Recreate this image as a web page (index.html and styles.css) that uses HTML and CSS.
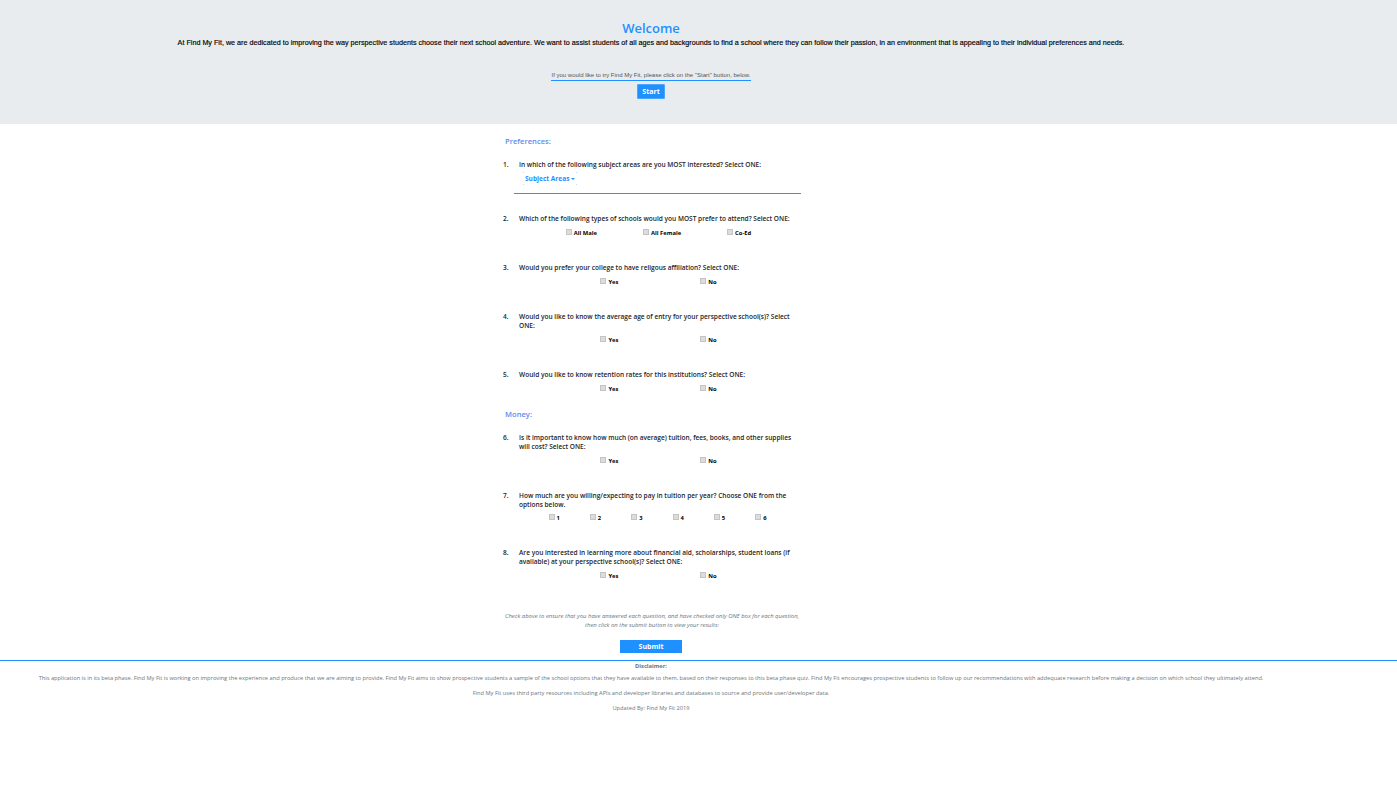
FILE: index.html
```html
<!DOCTYPE html>
<html lang="en">
<head>
  <meta charset="UTF-8" />
  <meta name="viewport" content="width=device-width, initial-scale=1.0"/>
  <title>Find My Fit</title>
  <link rel="stylesheet" href="styles.css">
</head>
<body>

<header class="hero">
  <div class="page">
    <h1>Welcome</h1>
    <p class="intro">At Find My Fit, we are dedicated to improving the way perspective students choose their next school adventure. We want to assist students of all ages and backgrounds to find a school where they can follow their passion, in an environment that is appealing to their individual preferences and needs.</p>
    <p class="try">If you would like to try Find My Fit, please click on the "Start" button, below.</p>
    <button class="start" type="button">Start</button>
  </div>
</header>

<div class="page">
  <form class="quiz">
    <h2>Preferences:</h2>

    <div class="question first">
      <span class="num">1.</span>
      <div>
        <p class="ask">In which of the following subject areas are you MOST interested? Select ONE:</p>
        <a class="dropdown" href="#">Subject Areas <span class="caret"></span></a>
      </div>
    </div>
    <hr class="rule">

    <div class="question q2">
      <span class="num">2.</span>
      <div>
        <p class="ask">Which of the following types of schools would you MOST prefer to attend? Select ONE:</p>
        <div class="opts three">
          <label><input type="checkbox"> All Male</label>
          <label><input type="checkbox"> All Female</label>
          <label><input type="checkbox"> Co-Ed</label>
        </div>
      </div>
    </div>

    <div class="question">
      <span class="num">3.</span>
      <div>
        <p class="ask">Would you prefer your college to have religous affiliation? Select ONE:</p>
        <div class="opts two">
          <label><input type="checkbox"> Yes</label>
          <label><input type="checkbox"> No</label>
        </div>
      </div>
    </div>

    <div class="question">
      <span class="num">4.</span>
      <div>
        <p class="ask">Would you like to know the average age of entry for your perspective school(s)? Select ONE:</p>
        <div class="opts two">
          <label><input type="checkbox"> Yes</label>
          <label><input type="checkbox"> No</label>
        </div>
      </div>
    </div>

    <div class="question">
      <span class="num">5.</span>
      <div>
        <p class="ask">Would you like to know retention rates for this institutions? Select ONE:</p>
        <div class="opts two">
          <label><input type="checkbox"> Yes</label>
          <label><input type="checkbox"> No</label>
        </div>
      </div>
    </div>

    <h2 class="money">Money:</h2>

    <div class="question first">
      <span class="num">6.</span>
      <div>
        <p class="ask">Is it important to know how much (on average) tuition, fees, books, and other supplies will cost? Select ONE:</p>
        <div class="opts two">
          <label><input type="checkbox"> Yes</label>
          <label><input type="checkbox"> No</label>
        </div>
      </div>
    </div>

    <div class="question">
      <span class="num">7.</span>
      <div>
        <p class="ask">How much are you willing/expecting to pay in tuition per year? Choose ONE from the options below.</p>
        <div class="opts six">
          <label><input type="checkbox"> 1</label>
          <label><input type="checkbox"> 2</label>
          <label><input type="checkbox"> 3</label>
          <label><input type="checkbox"> 4</label>
          <label><input type="checkbox"> 5</label>
          <label><input type="checkbox"> 6</label>
        </div>
      </div>
    </div>

    <div class="question">
      <span class="num">8.</span>
      <div>
        <p class="ask">Are you interested in learning more about financial aid, scholarships, student loans (if available) at your perspective school(s)? Select ONE:</p>
        <div class="opts two">
          <label><input type="checkbox"> Yes</label>
          <label><input type="checkbox"> No</label>
        </div>
      </div>
    </div>

    <p class="check">Check above to ensure that you have answered each question, and have checked only ONE box for each question, then click on the submit button to view your results:</p>
    <button class="submit" type="submit">Submit</button>
  </form>
</div>

<footer class="foot">
  <div class="page">
    <p class="disclaimer">Disclaimer:</p>
    <p class="beta">This application is in its beta phase. Find My Fit is working on improving the experience and produce that we are aiming to provide. Find My Fit aims to show prospective students a sample of the school options that they have available to them, based on their responses to this beta phase quiz. Find My Fit encourages prospective students to follow up our recommendations with addequate research before making a decision on which school they ultimately attend.</p>
    <p>Find My Fit uses third party resources including APIs and developer libraries and databases to source and provide user/developer data.</p>
    <p>Updated By: Find My Fit 2019</p>
  </div>
</footer>

</body>
</html>
```

FILE: styles.css
```css
body {
  margin: 0;
  font-family: "Open Sans", sans-serif;
  color: #212529;
  background: white;
}
p {
  margin: 0;
}
.page {
  width: 1302px;
}
.hero {
  background: #e9ecef;
  height: 124px;
  text-align: center;
  padding-top: 21px;
  box-sizing: border-box;
}
h1 {
  margin: 0;
  font-size: 13px;
  line-height: 15px;
  font-weight: 600;
  color: #1e90ff;
}
.intro {
  font-family: "Liberation Sans", sans-serif;
  font-size: 7.19px;
  line-height: 14px;
  color: black;
  -webkit-text-stroke: 0.15px black;
}
.try {
  font-family: "Liberation Sans", sans-serif;
  font-size: 6px;
  line-height: 9px;
  color: #555;
  width: 200px;
  margin: 21px auto 0;
  border-bottom: 1px solid #1e90ff;
}
.start {
  display: block;
  margin: 3px auto 0;
  width: 28px;
  height: 15px;
  padding: 0;
  border: 1px solid #4aa6ff;
  border-radius: 1px;
  background: #1e90ff;
  color: white;
  font-family: "Open Sans", sans-serif;
  font-size: 7px;
  font-weight: 700;
}
.quiz {
  width: 298px;
  margin-left: 503px;
}
h2 {
  margin: 0;
  padding: 12px 0 0 2px;
  font-size: 7.6px;
  line-height: 11px;
  font-weight: 600;
  color: #5b8def;
}
.money {
  padding-top: 15px;
}
.question {
  display: grid;
  grid-template-columns: 16px 1fr;
  font-size: 6.55px;
  line-height: 9px;
  font-weight: 600;
  margin-top: 25px;
}
.question.first {
  margin-top: 13px;
}
.q2 {
  margin-top: 20px;
}
.dropdown {
  display: block;
  width: 54px;
  height: 13px;
  box-sizing: border-box;
  margin: 3px 0 0 4px;
  padding: 2px 0 0 2px;
  color: #1e90ff;
  font-weight: 700;
  text-decoration: none;
  background:
    linear-gradient(#bcdcff, #bcdcff) left top / 1px 1px no-repeat,
    linear-gradient(#bcdcff, #bcdcff) right top / 1px 1px no-repeat,
    linear-gradient(#bcdcff, #bcdcff) left bottom / 1px 1px no-repeat,
    linear-gradient(#bcdcff, #bcdcff) right bottom / 1px 1px no-repeat;
}
.caret {
  display: inline-block;
  vertical-align: middle;
  border-top: 2px solid #1e90ff;
  border-left: 2px solid transparent;
  border-right: 2px solid transparent;
}
.rule {
  margin: 8px 0 0 11px;
  border: none;
  border-top: 1px solid #808080;
}
.opts {
  display: flex;
  justify-content: center;
  margin-top: 6px;
  padding-right: 3px;
}
.opts label {
  display: flex;
  align-items: center;
  font-size: 5.8px;
  line-height: 9px;
  font-weight: 700;
  color: black;
  gap: 2px;
}
.opts input {
  margin: -3px 0 0;
  width: 6px;
  height: 6px;
  appearance: none;
  background: #dcdcdc;
  border: 1px solid #c4c4c4;
}
.three {
  gap: 46px;
}
.two {
  gap: 82px;
}
.opts.six {
  gap: 30px;
  margin-top: 5px;
  padding-right: 5px;
}
.check {
  font-size: 5.9px;
  line-height: 9px;
  font-style: italic;
  color: #6c757d;
  text-align: center;
  margin-top: 31px;
}
.submit {
  display: block;
  margin: 10px 0 0 117px;
  width: 62px;
  height: 13px;
  padding: 0;
  border: none;
  background: #1e90ff;
  color: white;
  font-family: "Open Sans", sans-serif;
  font-size: 7px;
  font-weight: 700;
}
.foot {
  margin-top: 7px;
  padding-top: 1px;
  border-top: 1px solid #1e90ff;
  text-align: center;
  font-size: 5.7px;
  line-height: 9px;
  color: #6c757d;
}
.foot p {
  margin-bottom: 6px;
}
.foot .disclaimer {
  font-weight: 700;
  margin-bottom: 3px;
}
```
